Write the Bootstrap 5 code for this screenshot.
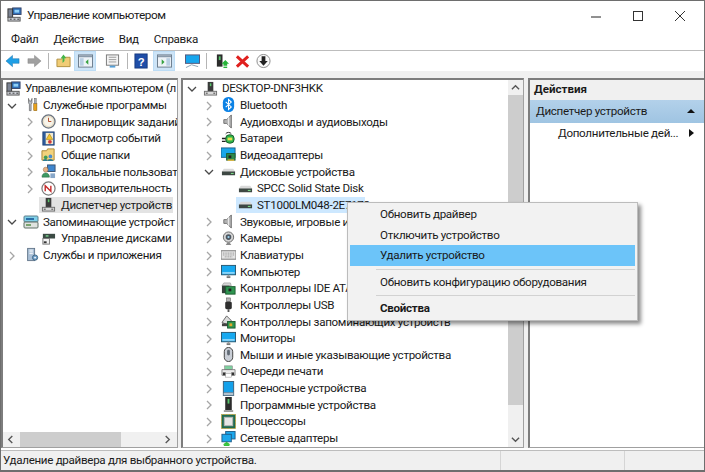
<!DOCTYPE html>
<html lang="ru">
<head>
<meta charset="utf-8">
<title>Управление компьютером</title>
<link href="https://cdn.jsdelivr.net/npm/bootstrap@5.3.0/dist/css/bootstrap.min.css" rel="stylesheet">
<style>
html,body{width:705px;height:472px;overflow:hidden;margin:0;background:#fff}
body{font-family:Roboto,"Noto Sans","Liberation Sans",sans-serif;font-size:11.6px;letter-spacing:-.3px;color:#1a1a1a;line-height:1}
.win{position:relative;width:705px;height:472px;border:1px solid #6e6e6e;border-bottom-width:2px;display:flex;flex-direction:column;background:#fff;overflow:hidden}
.ttl{height:27px;padding:6px 0 0 6px;flex:none;display:flex;align-items:flex-start}
.ttl svg.ico{width:15px;height:15px;margin-right:5px}
.ttl-text{font-size:11.8px;letter-spacing:-.4px;line-height:16px}
.wctl{margin-left:auto;display:flex;gap:26px;padding:3px 16px 0 0}
.wctl svg{width:16px;height:12px;display:block}
.mnu{flex:none;padding:3px 0 0 10px;display:flex;gap:15px;line-height:16px;border-bottom:1px solid #bdbdbd;height:23px}
.tb{height:20px;flex:none;display:flex;align-items:center;padding-left:4px;background:#fff}
.tbi{width:15px;height:16px;flex:none}
.tbh{width:22px;height:20px;background:#cde4f7;border:1px solid #bcdcf5;display:flex;align-items:center;justify-content:center;flex:none}
.tbs{width:1px;height:16px;background:#b5b5b5;flex:none}
.g3{margin-left:3px}.g4{margin-left:4px}.g5{margin-left:5px}.g6{margin-left:6px}.g7{margin-left:7px}.g8{margin-left:8px}.g9{margin-left:9px}.g10{margin-left:10px}
.panes{flex:1;display:flex;gap:3px;background:#f0f0f0;padding-top:7px;min-height:0}
.pn{background:#fff;border:1px solid #a0a0a0;border-top:2px solid #7d7d7d;border-left:2px solid #7d7d7d;position:relative;overflow:hidden;flex:none}
.pn-l{width:177px}
.pn-m{width:343px}
.pn-r{width:176px;margin-left:1px;border-right:0}
.tr{height:16.67px;display:flex;align-items:center;white-space:nowrap;position:relative}
.tr span{line-height:16px}
.tr svg.ico{width:15px;height:15px;flex:none;margin-right:4px}
.tr svg.chv{width:10px;height:10px;flex:none;position:absolute;top:4px}
.lr{padding-left:3px}
.l1{padding-left:22px}
.l1 svg.ico{width:14px;margin-right:4px}
.l1w{padding-left:20px}
.tr.l1w svg.ico{width:16px;height:16px}
.l2{padding-left:38px}
.tr.l2 svg.ico{margin-right:5px}
.ls{padding-left:36px}
.tr-sel{background:#e3e3e3;width:134px;padding-left:2px}
.tr.tr-sel svg.ico{margin-right:5px}
.ck1{left:4px}.ck2{left:22px}
.mr{padding-left:20px}
.m1{padding-left:38px}
.m2{padding-left:55px}
.ms{padding-left:53px}
.tr-act{background:#cde8ff;width:129px;padding-left:2px}
.mk1{left:4px}.mk2{left:21px}
.vbar{position:absolute;right:0;top:0;bottom:0;width:15px;background:#f0f0f0;z-index:2}
.vth{position:absolute;top:15px;left:0;right:0;height:310px;background:#cdcdcd}
.hbar{position:absolute;left:0;right:0;bottom:0;height:15px;background:#f0f0f0;z-index:2}
.hth{position:absolute;left:17px;top:0;bottom:0;width:101px;background:#cdcdcd}
.sbarr{position:absolute;width:9px;height:9px}
.ar-l{left:3px;top:3px}.ar-r{right:5px;top:3px}.ar-u{left:3px;top:3px}.ar-d{left:3px;bottom:3px}
.rhd{height:20px;background:#f0f0f0;font-weight:700;letter-spacing:0;padding:2px 0 0 4px;line-height:15px}
.rsec{height:23px;margin-top:0;background:linear-gradient(#b3d1ea,#9fc4e2);display:flex;align-items:center;padding-left:6px;position:relative}
.rsub{padding:2px 0 0 28px;line-height:16px;position:relative;height:22px}
.tri{position:absolute;width:8px;height:8px}
.tri-u{right:9px;top:7px}.tri-r{right:9px;top:6px}
.stb{height:20px;flex:none;background:#f0f0f0;border-top:1px solid #bdbdbd;display:flex;line-height:17px;margin-top:2px}
.stb-a{padding:1px 0 0 2px;flex:none;white-space:nowrap;width:499px}
.stb div+div{border-left:1px solid #d5d5d5}
.stb-m{width:124px}
.stb-e{flex:1}
.ctx.dropdown-menu{position:absolute;display:block;left:346px;top:201px;width:291px;height:119px;min-width:0;background:#f2f2f2;border:1px solid #bcbcbc;border-radius:0;padding:1px 2px;font-size:11.6px;box-shadow:3px 3px 4px rgba(0,0,0,.45);z-index:5}
.ctx .dropdown-item{padding:0 0 0 30px;height:20.5px;line-height:20px;color:#1a1a1a;font-size:11.6px;letter-spacing:-.3px}
.ctx .dropdown-item.active{background:#6cc4f9;color:#1a1a1a}
.ctx .dropdown-divider{margin:3px 0 2px 26px;border-top:1px solid #d2d2d2;opacity:1}
.ctx .itm-b{font-weight:700}
</style>
</head>
<body>
<svg class="d-none" xmlns="http://www.w3.org/2000/svg">
<symbol id="comp" viewBox="0 0 16 16"><rect x="6" y="1" width="9" height="7" fill="#2f6fb8" stroke="#39476b"/><rect x="8" y="3" width="5" height="3" fill="#8fd0f7"/><rect x="1" y="2" width="5" height="9" fill="#7c8494" stroke="#333"/><rect x="1" y="11" width="13" height="4" fill="#c9ccd2" stroke="#555"/><path d="M3 13h2m2 0h2m2 0h2" stroke="#333"/></symbol>
<symbol id="tools" viewBox="0 0 16 16"><path d="M4 1v5l1 2v7h2V8l1-2V1L7 4H5z" fill="#b6bcc4" stroke="#555" stroke-width=".7"/><rect x="10" y="7" width="3.6" height="8" fill="#e9a21b" stroke="#8a5a00" stroke-width=".6"/><rect x="10.8" y="1" width="2" height="6" fill="#a7adb5" stroke="#555" stroke-width=".5"/></symbol>
<symbol id="clock" viewBox="0 0 16 16"><circle cx="8" cy="8" r="7" fill="#e9dfc9" stroke="#6a7482" stroke-width="1.4"/><circle cx="8" cy="8" r="4.8" fill="#f7f4ea"/><path d="M8 4v4h3" stroke="#b04a2a" fill="none"/></symbol>
<symbol id="event" viewBox="0 0 16 16"><rect x="2" y="1" width="12" height="14" fill="#2d5c9e" stroke="#26477a"/><rect x="5" y="2" width="8" height="12" fill="#f3ead0"/><path d="M9 3l3.500 6h-7z" fill="#f4c430" stroke="#8a6d00" stroke-width=".5"/><circle cx="9.500" cy="11.500" r="2" fill="#d13b3b"/></symbol>
<symbol id="share" viewBox="0 0 16 16"><path d="M1 4h5l1-2h7v12H1z" fill="#f3d27c" stroke="#a98636"/><circle cx="5" cy="11" r="2" fill="#3f9d57"/><circle cx="10" cy="10" r="2" fill="#4a8ed0"/><path d="M2 15c0-3 5-3 5 0zM7 15c0-3 6-3 6 0z" fill="#2f7c93"/></symbol>
<symbol id="users" viewBox="0 0 16 16"><rect x="7" y="1" width="8" height="7" fill="#3e86cf" stroke="#3a5170"/><circle cx="5" cy="6" r="2.600" fill="#e7b183" stroke="#8a5a30" stroke-width=".5"/><path d="M1 14c0-6 8-6 8 0z" fill="#3d9a63" stroke="#245f3c" stroke-width=".5"/><rect x="10" y="10" width="5" height="5" fill="#88a7c9"/></symbol>
<symbol id="perf" viewBox="0 0 16 16"><circle cx="8" cy="8" r="7" fill="#fff" stroke="#7b7b7b" stroke-width="1.300"/><path d="M4.500 11V5l6 6V5" stroke="#c62d2d" stroke-width="1.500" fill="none"/></symbol>
<symbol id="dev" viewBox="0 0 16 16"><rect x="5" y="1" width="6" height="10" fill="#3b3b3b"/><rect x="7.300" y="2.500" width="1.600" height="3" fill="#58c66a"/><rect x="1.500" y="11" width="13" height="4" fill="#dadada" stroke="#6d6d6d"/><rect x="3" y="12.500" width="2" height="1" fill="#444"/><rect x="11" y="12.500" width="2" height="1" fill="#444"/></symbol>
<symbol id="stor" viewBox="0 0 16 16"><rect x="1" y="2" width="14" height="6" rx="1" fill="#7fd0e9" stroke="#5f7f8c"/><rect x="1" y="8" width="14" height="6" rx="1" fill="#dfe3df" stroke="#5f6f66"/><rect x="3" y="4" width="8" height="2" fill="#2a6fa8"/><rect x="3" y="10" width="5" height="2" fill="#7aa36e"/></symbol>
<symbol id="dm" viewBox="0 0 16 16"><rect x="2" y="3" width="13" height="5" fill="#3b4b44"/><rect x="5" y="4.500" width="3" height="1.500" fill="#7cd18f"/><rect x="2" y="8" width="7" height="6" fill="#f2f2f2" stroke="#777"/><rect x="3" y="11" width="3" height="2" fill="#333"/></symbol>
<symbol id="svc" viewBox="0 0 16 16"><rect x="3" y="1" width="8" height="14" fill="#a9bfd6" stroke="#5f7287"/><path d="M5 3h4M5 5h4M5 7h4" stroke="#fff"/><circle cx="11.500" cy="11.500" r="3" fill="#6f9fc9" stroke="#3d627f"/><circle cx="11.500" cy="11.500" r="1" fill="#fff"/></symbol>
<symbol id="bt" viewBox="0 0 16 16"><rect x="2" y="0" width="12" height="16" rx="5.500" fill="#0c82e5"/><path d="M5 5.200l6 5.400-3 2.700V2.700l3 2.700-6 5.400" stroke="#fff" stroke-width="1.100" fill="none"/></symbol>
<symbol id="spk" viewBox="0 0 16 16"><path d="M3 6h3l5-5v14l-5-5H3z" fill="#b3b3b3" stroke="#6f6f6f"/><path d="M8 3.500v9" stroke="#e8e8e8" stroke-width="1.400"/></symbol>
<symbol id="bat" viewBox="0 0 16 16"><rect x="5" y="4" width="9" height="9" rx="4" fill="#2cb34a" stroke="#1a5c2a"/><path d="M1 8h4M1 11h4" stroke="#222" stroke-width="1.400"/><path d="M5 3c1-2 5-2 6 0" stroke="#222" fill="none"/><rect x="7" y="7" width="5" height="3" fill="#e8e050"/></symbol>
<symbol id="vid" viewBox="0 0 16 16"><rect x="0" y="1" width="15" height="10" fill="#1aa7ea" stroke="#1e5e8a"/><rect x="6" y="7" width="9" height="7" fill="#2e8a4b" stroke="#1d5c30"/><rect x="8" y="9" width="3" height="3" fill="#222"/><path d="M7 14h7" stroke="#e7b93a" stroke-width="1.500"/></symbol>
<symbol id="hdd" viewBox="0 0 16 16"><path d="M3 5h10l2 3v3H1V8z" fill="#d9d9d9"/><rect x="1" y="8" width="14" height="4" fill="#3d4743"/><rect x="10.500" y="9.500" width="3" height="1.200" fill="#79d685"/></symbol>
<symbol id="cam" viewBox="0 0 16 16"><circle cx="8" cy="6.500" r="5.500" fill="#d6d6d6" stroke="#666"/><circle cx="8" cy="6.500" r="3" fill="#4d5761"/><circle cx="8" cy="6.500" r="1.200" fill="#9bd2ee"/><path d="M5 15h6l-2-3H7z" fill="#888"/></symbol>
<symbol id="kbd" viewBox="0 0 16 16"><rect x="0" y="4" width="16" height="9" fill="#e4e4e4" stroke="#777"/><path d="M2 6.500h12M2 8.500h12M4 10.500h8" stroke="#9a9a9a" stroke-dasharray="1.200 .6"/></symbol>
<symbol id="mon" viewBox="0 0 16 16"><rect x="0.500" y="1.500" width="15" height="10" fill="#17a9f0" stroke="#27566f"/><rect x="1.500" y="8.500" width="13" height="2" fill="#8ad4f8"/><path d="M6 14h4" stroke="#777" stroke-width="2"/><rect x="7" y="11.500" width="2" height="2" fill="#999"/></symbol>
<symbol id="ide" viewBox="0 0 16 16"><path d="M1 5l2-3h7l1 3z" fill="#d6d6d6" stroke="#777" stroke-width=".5"/><rect x="1" y="5" width="8" height="8" fill="#34403a"/><rect x="5" y="6" width="10" height="8" fill="#2e9550" stroke="#1d5c30"/><rect x="8" y="8" width="3" height="3" fill="#222"/></symbol>
<symbol id="usb" viewBox="0 0 16 16"><rect x="6" y="1" width="4" height="4" fill="#b4b4b4" stroke="#555" stroke-width=".6"/><rect x="4.500" y="5" width="7" height="8" rx="1.500" fill="#2e2e2e"/><path d="M8 13v3" stroke="#555" stroke-width="2"/></symbol>
<symbol id="stc" viewBox="0 0 16 16"><path d="M1 9l5-7 5 5-5 4z" fill="#dcdcdc" stroke="#444" stroke-width=".8"/><rect x="1" y="10" width="9" height="3" fill="#444"/><rect x="7" y="8" width="8" height="7" fill="#2e9550" stroke="#1d5c30"/><rect x="9" y="10" width="3" height="3" fill="#e1a92a"/></symbol>
<symbol id="mouse" viewBox="0 0 16 16"><rect x="3.500" y="0.500" width="9" height="15" rx="4.500" fill="#c9ced6" stroke="#3c3c3c"/><rect x="6.500" y="3" width="3" height="6" rx="1.500" fill="#616a75"/></symbol>
<symbol id="prn" viewBox="0 0 16 16"><rect x="4" y="2" width="8" height="4" fill="#7fd0a0" stroke="#666" stroke-width=".5"/><path d="M1 6h14v6H1z" fill="#ececec" stroke="#555" stroke-width=".7"/><rect x="2" y="9" width="3" height="3" fill="#333"/><rect x="11" y="9" width="3" height="3" fill="#333"/><rect x="5" y="10" width="6" height="4" fill="#fff" stroke="#888" stroke-width=".5"/></symbol>
<symbol id="port" viewBox="0 0 16 16"><rect x="2.500" y="0.500" width="11" height="15" fill="#14a1ea" stroke="#3b5f78"/><rect x="2.500" y="12" width="11" height="3.500" fill="#b4c3cf" stroke="#3b5f78" stroke-width=".5"/></symbol>
<symbol id="soft" viewBox="0 0 16 16"><rect x="4.500" y="0" width="7" height="14" fill="#2c2c2c"/><rect x="7" y="2" width="2" height="5" fill="#57c56b"/><rect x="3" y="14" width="10" height="2" fill="#999"/></symbol>
<symbol id="cpu" viewBox="0 0 16 16"><rect x="0.500" y="0.500" width="15" height="15" fill="#1f6a50" stroke="#c6a02b" stroke-dasharray="1 .6"/><rect x="3.500" y="3.500" width="9" height="9" fill="#e6e6e6" stroke="#b5b5b5"/></symbol>
<symbol id="net" viewBox="0 0 16 16"><rect x="5" y="0.500" width="10" height="8" fill="#1ba7ec" stroke="#1e5e8a"/><rect x="1" y="3.500" width="10" height="8" fill="#1ba7ec" stroke="#1e5e8a"/><path d="M6 11.500l-4 3h8z" fill="#35c13a"/><rect x="3" y="14" width="6" height="2" fill="#35c13a"/></symbol>
<symbol id="r" viewBox="0 0 10 10"><path d="M3 1l4 4-4 4" fill="none" stroke="#a6a6a6" stroke-width="1.300"/></symbol>
<symbol id="d" viewBox="0 0 10 10"><path d="M1 3l4 4 4-4" fill="none" stroke="#4a4a4a" stroke-width="1.300"/></symbol>
</svg>

<div class="win">
  <div class="ttl">
    <svg class="ico"><use href="#comp"/></svg>
    <div class="ttl-text">Управление компьютером</div>
    <div class="wctl">
      <svg viewBox="0 0 16 12"><path d="M3 7h10" stroke="#222" stroke-width="1"/></svg>
      <svg viewBox="0 0 16 12"><rect x="3.500" y="1.500" width="9" height="9" fill="none" stroke="#333"/></svg>
      <svg viewBox="0 0 16 12"><path d="M3 1l10 10M13 1L3 11" stroke="#333" fill="none"/></svg>
    </div>
  </div>
  <nav class="mnu"><span>Файл</span><span>Действие</span><span>Вид</span><span>Справка</span></nav>
  <div class="tb">
    <svg class="tbi" viewBox="0 0 16 16"><path d="M1 8l7-6v3.500h7v5H8V14z" fill="#1f9fe6" stroke="#1a6fa8" stroke-width=".5"/></svg>
    <svg class="tbi g7" viewBox="0 0 16 16"><path d="M15 8L8 2v3.500H1v5h7V14z" fill="#a0a0a0" stroke="#808080" stroke-width=".5"/></svg>
    <div class="tbs g6"></div>
    <svg class="tbi g7" viewBox="0 0 16 16"><path d="M1 6h5l1-2h8v10H1z" fill="#f1cc75" stroke="#b08f3f"/><path d="M7 10V5H5l3-4 3 4H9v3" fill="#45b54a"/></svg>
    <div class="tbh g3"><svg class="tbi" viewBox="0 0 16 16"><rect x="0.500" y="1.500" width="15" height="13" fill="#eef3f8" stroke="#6a7a8a"/><rect x="1" y="2" width="14" height="2" fill="#8a9aaa"/><rect x="2" y="5" width="4" height="8" fill="#b9cfe2"/><path d="M11 6l-3 3 3 3z" fill="#37a13f"/></svg></div>
    <svg class="tbi g9" viewBox="0 0 16 16"><rect x="1.500" y="1.500" width="13" height="11" fill="#f4f4f4" stroke="#777"/><path d="M4 4h8M4 6.500h8M4 9h8" stroke="#999"/><rect x="5" y="13" width="6" height="2" fill="#55a0d8"/></svg>
    <div class="tbs g7"></div>
    <svg class="tbi g6" viewBox="0 0 16 16"><rect x="1" y="0.500" width="13" height="15" fill="#1f4ea8" stroke="#173a80"/><text x="7.500" y="13" font-size="12" font-weight="700" fill="#fff" text-anchor="middle" font-family="Liberation Sans">?</text></svg>
    <div class="tbh g4"><svg class="tbi" viewBox="0 0 16 16"><rect x="0.500" y="1.500" width="15" height="13" fill="#eef3f8" stroke="#6a7a8a"/><rect x="1" y="2" width="14" height="2" fill="#8a9aaa"/><rect x="10" y="5" width="4" height="8" fill="#b9cfe2"/><path d="M5 6l3 3-3 3z" fill="#37a13f"/></svg></div>
    <svg class="tbi g10" viewBox="0 0 16 16"><rect x="0.500" y="1.500" width="15" height="9" fill="#16a6ee" stroke="#557"/><path d="M1 15l6-3 7 2" stroke="#8aa0b0" fill="none"/></svg>
    <div class="tbs g6"></div>
    <svg class="tbi g8" viewBox="0 0 16 16"><rect x="2" y="1" width="6" height="13" fill="#2c2c2c"/><rect x="4" y="3" width="2" height="4" fill="#57c56b"/><path d="M11 7l4 4h-2v2H9v-2H7z" fill="#27b33a"/><rect x="9" y="14" width="4" height="1.500" fill="#27b33a"/></svg>
    <svg class="tbi g5" viewBox="0 0 16 16"><path d="M2 3l12 11M14 3L2 14" stroke="#e0201e" stroke-width="3.200"/></svg>
    <svg class="tbi g6" viewBox="0 0 16 16"><circle cx="8" cy="8" r="7" fill="#fafafa" stroke="#8a8a8a"/><path d="M6 3h4v5h2.500L8 13 3.500 8H6z" fill="#222"/></svg>
  </div>
  <div class="panes">
    <div class="pn pn-l">
      <div class="tr lr"><svg class="ico"><use href="#comp"/></svg><span>Управление компьютером (л</span></div>
      <div class="tr l1"><svg class="chv ck1"><use href="#d"/></svg><svg class="ico"><use href="#tools"/></svg><span>Служебные программы</span></div>
      <div class="tr l2"><svg class="chv ck2"><use href="#r"/></svg><svg class="ico"><use href="#clock"/></svg><span>Планировщик заданий</span></div>
      <div class="tr l2"><svg class="chv ck2"><use href="#r"/></svg><svg class="ico"><use href="#event"/></svg><span>Просмотр событий</span></div>
      <div class="tr l2"><svg class="chv ck2"><use href="#r"/></svg><svg class="ico"><use href="#share"/></svg><span>Общие папки</span></div>
      <div class="tr l2"><svg class="chv ck2"><use href="#r"/></svg><svg class="ico"><use href="#users"/></svg><span>Локальные пользовате</span></div>
      <div class="tr l2"><svg class="chv ck2"><use href="#r"/></svg><svg class="ico"><use href="#perf"/></svg><span>Производительность</span></div>
      <div class="tr ls"><div class="tr tr-sel"><svg class="ico"><use href="#dev"/></svg><span>Диспетчер устройств</span></div></div>
      <div class="tr l1w"><svg class="chv ck1"><use href="#d"/></svg><svg class="ico"><use href="#stor"/></svg><span>Запоминающие устройст</span></div>
      <div class="tr l2"><svg class="ico"><use href="#dm"/></svg><span>Управление дисками</span></div>
      <div class="tr l1"><svg class="chv ck1"><use href="#r"/></svg><svg class="ico"><use href="#svc"/></svg><span>Службы и приложения</span></div>
      <div class="hbar"><svg class="sbarr ar-l" viewBox="0 0 10 10"><path d="M7 1L3 5l4 4" fill="none" stroke="#555" stroke-width="1.500"/></svg><div class="hth"></div><svg class="sbarr ar-r" viewBox="0 0 10 10"><path d="M3 1l4 4-4 4" fill="none" stroke="#555" stroke-width="1.500"/></svg></div>
    </div>
    <div class="pn pn-m">
      <div class="tr mr"><svg class="chv mk1"><use href="#d"/></svg><svg class="ico"><use href="#dev"/></svg><span>DESKTOP-DNF3HKK</span></div>
      <div class="tr m1"><svg class="chv mk2"><use href="#r"/></svg><svg class="ico"><use href="#bt"/></svg><span>Bluetooth</span></div>
      <div class="tr m1"><svg class="chv mk2"><use href="#r"/></svg><svg class="ico"><use href="#spk"/></svg><span>Аудиовходы и аудиовыходы</span></div>
      <div class="tr m1"><svg class="chv mk2"><use href="#r"/></svg><svg class="ico"><use href="#bat"/></svg><span>Батареи</span></div>
      <div class="tr m1"><svg class="chv mk2"><use href="#r"/></svg><svg class="ico"><use href="#vid"/></svg><span>Видеоадаптеры</span></div>
      <div class="tr m1"><svg class="chv mk2"><use href="#d"/></svg><svg class="ico"><use href="#hdd"/></svg><span>Дисковые устройства</span></div>
      <div class="tr m2"><svg class="ico"><use href="#hdd"/></svg><span>SPCC Solid State Disk</span></div>
      <div class="tr ms"><div class="tr tr-act"><svg class="ico"><use href="#hdd"/></svg><span>ST1000LM048-2E7172</span></div></div>
      <div class="tr m1"><svg class="chv mk2"><use href="#r"/></svg><svg class="ico"><use href="#spk"/></svg><span>Звуковые, игровые и видеоустройства</span></div>
      <div class="tr m1"><svg class="chv mk2"><use href="#r"/></svg><svg class="ico"><use href="#cam"/></svg><span>Камеры</span></div>
      <div class="tr m1"><svg class="chv mk2"><use href="#r"/></svg><svg class="ico"><use href="#kbd"/></svg><span>Клавиатуры</span></div>
      <div class="tr m1"><svg class="chv mk2"><use href="#r"/></svg><svg class="ico"><use href="#mon"/></svg><span>Компьютер</span></div>
      <div class="tr m1"><svg class="chv mk2"><use href="#r"/></svg><svg class="ico"><use href="#ide"/></svg><span>Контроллеры IDE ATA/ATAPI</span></div>
      <div class="tr m1"><svg class="chv mk2"><use href="#r"/></svg><svg class="ico"><use href="#usb"/></svg><span>Контроллеры USB</span></div>
      <div class="tr m1"><svg class="chv mk2"><use href="#r"/></svg><svg class="ico"><use href="#stc"/></svg><span>Контроллеры запоминающих устройств</span></div>
      <div class="tr m1"><svg class="chv mk2"><use href="#r"/></svg><svg class="ico"><use href="#mon"/></svg><span>Мониторы</span></div>
      <div class="tr m1"><svg class="chv mk2"><use href="#r"/></svg><svg class="ico"><use href="#mouse"/></svg><span>Мыши и иные указывающие устройства</span></div>
      <div class="tr m1"><svg class="chv mk2"><use href="#r"/></svg><svg class="ico"><use href="#prn"/></svg><span>Очереди печати</span></div>
      <div class="tr m1"><svg class="chv mk2"><use href="#r"/></svg><svg class="ico"><use href="#port"/></svg><span>Переносные устройства</span></div>
      <div class="tr m1"><svg class="chv mk2"><use href="#r"/></svg><svg class="ico"><use href="#soft"/></svg><span>Программные устройства</span></div>
      <div class="tr m1"><svg class="chv mk2"><use href="#r"/></svg><svg class="ico"><use href="#cpu"/></svg><span>Процессоры</span></div>
      <div class="tr m1"><svg class="chv mk2"><use href="#r"/></svg><svg class="ico"><use href="#net"/></svg><span>Сетевые адаптеры</span></div>
      <div class="vbar"><svg class="sbarr ar-u" viewBox="0 0 10 10"><path d="M1 7l4-4 4 4" fill="none" stroke="#555" stroke-width="1.500"/></svg><div class="vth"></div><svg class="sbarr ar-d" viewBox="0 0 10 10"><path d="M1 3l4 4 4-4" fill="none" stroke="#555" stroke-width="1.500"/></svg></div>
    </div>
    <div class="pn pn-r">
      <div class="rhd">Действия</div>
      <div class="rsec">Диспетчер устройств<svg class="tri tri-u" viewBox="0 0 8 8"><path d="M0 6l4-4 4 4z" fill="#111"/></svg></div>
      <div class="rsub">Дополнительные дей...<svg class="tri tri-r" viewBox="0 0 8 8"><path d="M2 0l5 4-5 4z" fill="#111"/></svg></div>
    </div>
  </div>
  <div class="stb"><div class="stb-a">Удаление драйвера для выбранного устройства.</div><div class="stb-m"></div><div class="stb-e"></div></div>
  <ul class="ctx dropdown-menu list-unstyled m-0">
    <li><a class="dropdown-item" href="#">Обновить драйвер</a></li>
    <li><a class="dropdown-item" href="#">Отключить устройство</a></li>
    <li><a class="dropdown-item active" href="#">Удалить устройство</a></li>
    <li><hr class="dropdown-divider"></li>
    <li><a class="dropdown-item" href="#">Обновить конфигурацию оборудования</a></li>
    <li><hr class="dropdown-divider"></li>
    <li><a class="dropdown-item itm-b" href="#">Свойства</a></li>
  </ul>
</div>
<script src="https://cdn.jsdelivr.net/npm/bootstrap@5.3.0/dist/js/bootstrap.bundle.min.js"></script>
</body>
</html>
